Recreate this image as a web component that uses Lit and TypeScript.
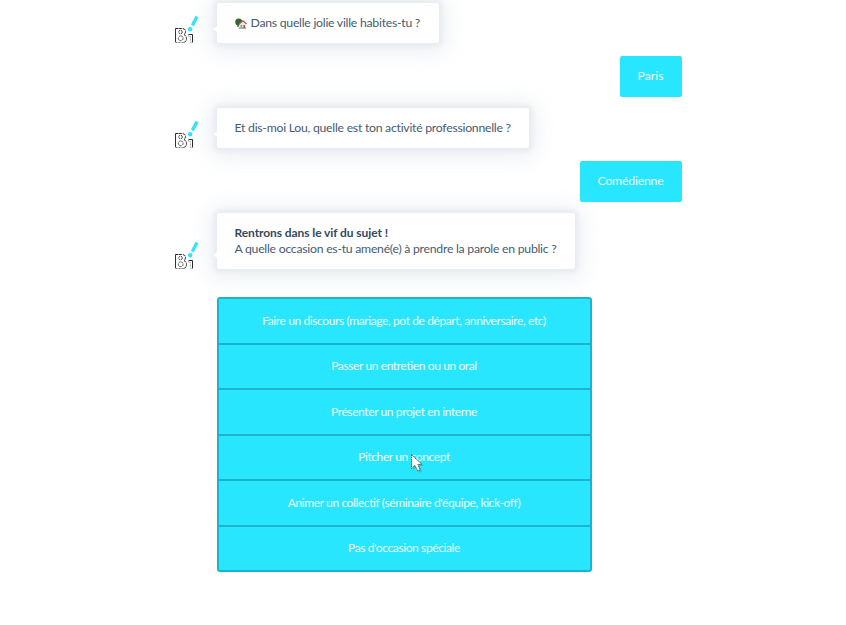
import { LitElement, html, css } from "lit";
import { customElement } from "lit/decorators.js";

@customElement("bot-logo")
class BotLogo extends LitElement {
  static styles = css`:host{display:block;width:26px;height:30px}svg{display:block}`;
  render() {
    return html`<svg width="26" height="30" viewBox="0 0 26 30">
      <path d="M.5 15.5H6.5Q10.5 15.5 10.5 18.5Q10.5 20.5 9 21.5Q11.5 23 11.5 25.5Q11.5 29.5 7.5 29.5" fill="none" stroke="#26262b" stroke-dasharray="3 .6"/>
      <path d="M.5 29.5H7.5" fill="none" stroke="#777" stroke-dasharray="2 1"/>
      <path d="M.5 15.5V29" stroke="#333"/>
      <circle cx="5.5" cy="19" r="1.8" fill="none" stroke="#333" stroke-width=".9" stroke-dasharray="2 .7"/>
      <circle cx="5.7" cy="25.3" r="2.4" fill="none" stroke="#333" stroke-width=".9" stroke-dasharray="2 .7"/>
      <path d="M13.5 21.5H17.5V29.5" fill="none" stroke="#26262b"/>
      <path d="M13.5 21.5V23.5H15.5V29.5H17.5" fill="none" stroke="#aaa" stroke-dasharray="2 1"/>
      <path d="M22 3.4L17.4 12.6" stroke="#29e6ff" stroke-width="3.3"/><circle cx="15.2" cy="16.2" r="2.2" fill="#29e6ff"/>
    </svg>`;
  }
}

@customElement("app-root")
class AppRoot extends LitElement {
  static styles = css`
    :host{display:block;position:relative;height:625px;overflow:hidden;background:#fff;font:12.25px/16px Lato,sans-serif;color:#475c70}
    *{box-sizing:border-box}
    .chat{width:507px;margin-left:175px;padding-top:3px;display:flex;flex-direction:column}
    .row{display:flex;align-items:flex-end;margin-bottom:13px}
    .bubble{position:relative;margin-left:16px;padding:12px 17.5px;background:#fff;border-radius:2px;box-shadow:0 0 4px 3px #e8ebf0,0 2px 22px 5px rgba(218,224,233,.65);white-space:nowrap;letter-spacing:-.262px}
    .bubble::before{content:"";position:absolute;left:-4px;bottom:11px;border:3px solid transparent;border-left:0;border-right:4px solid #fff}
    .town{width:222px}
    .job{width:312px}
    .question{width:358px}
    b{color:#34495e;font-size:12px;letter-spacing:-.08px}
    .house{width:12px;height:11px;vertical-align:-2px;margin-right:4px}
    .reply{align-self:flex-end;height:41px;display:flex;align-items:center;justify-content:center;padding:0 1px 2px 0;background:#29e6ff;color:#edfaff;border-radius:2px;margin-bottom:11px;letter-spacing:-.2px}
    .short{width:62px;letter-spacing:0}
    .long{width:102px}
    .options{width:375px;margin:15px 0 0 42px;border:2px solid #1bb4cc;border-radius:3px;background:#29e6ff;font-size:12px;letter-spacing:-.39px}
    .option{height:45.5px;display:flex;align-items:center;justify-content:center;padding-right:1px;color:#effaff;border-bottom:2px solid #1bb4cc}
    .option:last-child{height:43.5px;border-bottom:0}
    .cursor{position:absolute;left:410px;top:453px}
  `;
  render() {
    const options = ["Faire un discours (mariage, pot de départ, anniversaire, etc)", "Passer un entretien ou un oral", "Présenter un projet en interne", "Pitcher un concept", "Animer un collectif (séminaire d'équipe, kick-off)", "Pas d'occasion spéciale"];
    return html`<div class="chat">
      <div class="row"><bot-logo></bot-logo><div class="bubble town"><svg class="house" viewBox="0 0 12 11">
        <circle cx="3.7" cy="4" r="3.5" fill="#37672c"/><path d="M3 6V9" stroke="#795238" stroke-width="1.4"/>
        <path d="M4.5 5.5L8 3L11 5.5V10H4.5Z" fill="#e6edf2"/><path d="M4 6L8 2.8L11.5 6" fill="none" stroke="#b65348" stroke-width="1.2"/>
        <path d="M5.5 7H7.2V8.7H5.5Z" fill="#4d9ec1"/><path d="M8.5 7H10V10H8.5Z" fill="#995747"/><path d="M3.8 10H11" stroke="#547848"/>
      </svg>Dans quelle jolie ville habites-tu ?</div></div>
      <div class="reply short">Paris</div>
      <div class="row"><bot-logo></bot-logo><div class="bubble job">Et dis-moi Lou, quelle est ton activité professionnelle ?</div></div>
      <div class="reply long">Comédienne</div>
      <div class="row"><bot-logo></bot-logo><div class="bubble question"><b>Rentrons dans le vif du sujet !</b><br>A quelle occasion es-tu amené(e) à prendre la parole en public ?</div></div>
      <div class="options">${options.map(t => html`<div class="option">${t}</div>`)}</div>
    </div>
    <svg class="cursor" width="15" height="21" viewBox="0 0 15 21">
      <path d="M2 2V16L5.2 13L8 19L11 17.6L8.5 12H13Z" fill="#168b9d" opacity=".35" transform="translate(1 1)"/>
      <path d="M1.5 1.5V15.5L5 12.4L7.6 18L10.3 16.8L7.8 11.4H12Z" fill="#fff" stroke="#444" stroke-width=".9" stroke-dasharray="1.5 .7"/>
    </svg>`;
  }
}
